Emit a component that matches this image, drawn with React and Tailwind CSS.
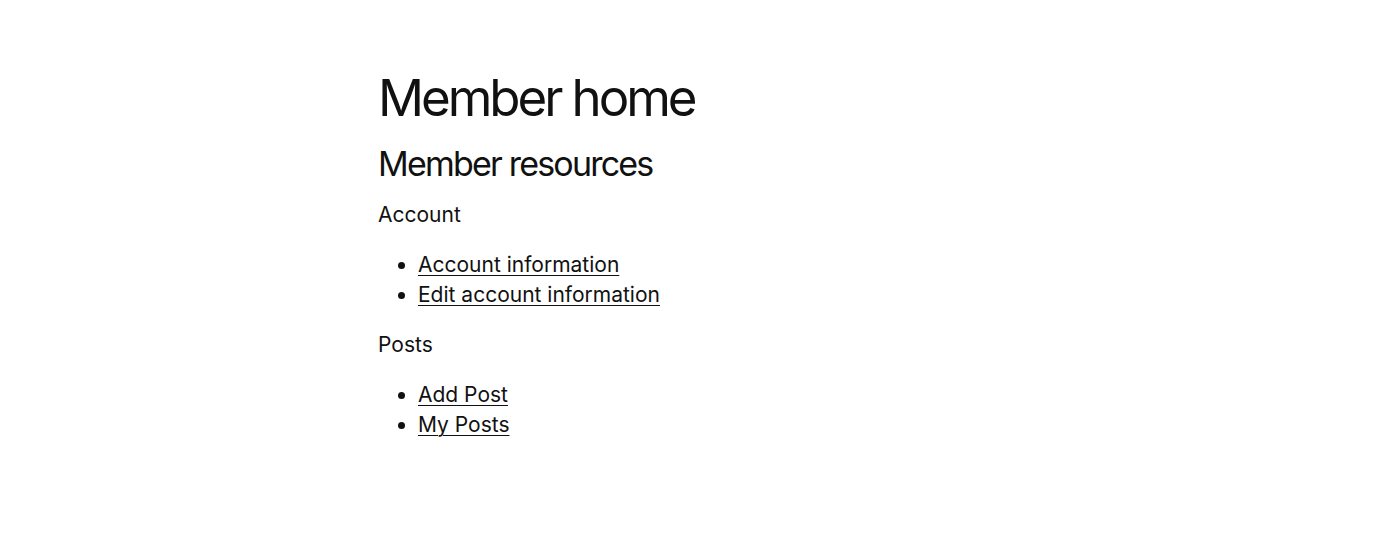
export default function App() {
  return (
    <div className="min-h-screen bg-white text-[#111]" style={{ fontFamily: 'Inter, "Noto Sans", sans-serif' }}>
      <main className="mx-auto w-[644px] pt-[66px]">
        <h1 className="text-[51px] leading-[64px] tracking-[-0.06em] font-normal">Member home</h1>
        <h2 className="mt-[12px] text-[34px] leading-[44px] tracking-[-0.053em] font-normal">Member resources</h2>

        <p className="mt-[14px] text-[21px] leading-[30px]">Account</p>
        <ul className="mt-[20px] list-disc pl-[40px] text-[21px] leading-[30px]">
          <li><a href="#" className="underline underline-offset-[3px] decoration-1">Account information</a></li>
          <li><a href="#" className="underline underline-offset-[3px] decoration-1">Edit account information</a></li>
        </ul>

        <p className="mt-[20px] text-[21px] leading-[30px]">Posts</p>
        <ul className="mt-[20px] list-disc pl-[40px] text-[21px] leading-[30px]">
          <li><a href="#" className="underline underline-offset-[3px] decoration-1">Add Post</a></li>
          <li><a href="#" className="underline underline-offset-[3px] decoration-1">My Posts</a></li>
        </ul>
      </main>
    </div>
  );
}
